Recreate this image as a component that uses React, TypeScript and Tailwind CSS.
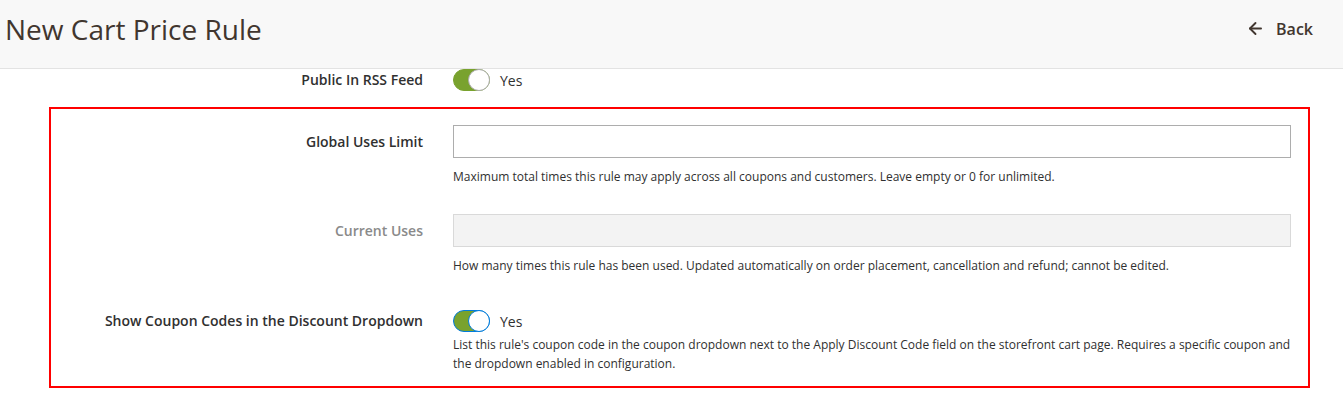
import { ArrowLeft } from "lucide-react";

const font = { fontFamily: "'Open Sans', 'Liberation Sans', sans-serif" };

function Toggle({ focused = false }: { focused?: boolean }) {
  return (
    <div className="flex items-center gap-[10px]">
      <div
        className={`relative w-[37px] h-[22px] rounded-full bg-[#79a22e] border ${
          focused ? "border-[#007bdb]" : "border-[#79a22e]"
        }`}
      >
        <span
          className={`absolute right-[-1px] top-[-1px] w-[22px] h-[22px] rounded-full bg-white border ${
            focused ? "border-[#007bdb]" : "border-[#adadad]"
          }`}
        />
      </div>
      <span className="text-[14px] text-[#303030]">Yes</span>
    </div>
  );
}

export default function App() {
  return (
    <div className="w-[1343px] h-[401px] bg-white overflow-hidden" style={font}>
      <header className="h-[69px] bg-[#f8f8f8] border-b border-[#e3e3e3] flex items-center justify-between pl-[5px] pr-[30px]">
        <h1 className="text-[28px] font-normal text-[#41362f] leading-none pb-[11px]">New Cart Price Rule</h1>
        <button className="flex items-center gap-[11px] text-[#41362f] font-semibold text-[16px] pb-[11px]">
          <ArrowLeft className="w-[19px] h-[19px]" strokeWidth={2.4} />
          Back
        </button>
      </header>

      <div className="pl-[51px]">
        <div className="grid grid-cols-[372px_838px] gap-x-[30px] items-center h-[22px]">
          <label className="text-right text-[14px] font-semibold text-[#303030] pb-[1px]">Public In RSS Feed</label>
          <Toggle />
        </div>
      </div>

      <section className="mt-[16px] ml-[49px] w-[1261px] border-2 border-[#ff0000] pt-[16px] pb-[13px]">
        <div className="grid grid-cols-[372px_838px] gap-x-[30px]">
          <label className="text-right text-[14px] font-semibold text-[#303030] pt-[6px]">Global Uses Limit</label>
          <div>
            <input className="w-full h-[33px] border border-[#adadad] bg-white" />
            <p className="mt-[10px] text-[12px] leading-[18px] text-[#303030]">
              Maximum total times this rule may apply across all coupons and customers. Leave empty or 0 for unlimited.
            </p>
          </div>
        </div>

        <div className="grid grid-cols-[372px_838px] gap-x-[30px] mt-[28px]">
          <label className="text-right text-[14px] font-semibold text-[#8a8a8a] pt-[6px]">Current Uses</label>
          <div>
            <input disabled className="w-full h-[33px] border border-[#d9d9d9] bg-[#f3f3f3]" />
            <p className="mt-[10px] text-[12px] leading-[18px] text-[#303030]">
              How many times this rule has been used. Updated automatically on order placement, cancellation and refund; cannot be edited.
            </p>
          </div>
        </div>

        <div className="grid grid-cols-[372px_838px] gap-x-[30px] mt-[35px]">
          <label className="text-right text-[14px] font-semibold text-[#303030] leading-[22px]">
            Show Coupon Codes in the Discount Dropdown
          </label>
          <div>
            <Toggle focused />
            <p className="mt-[3px] text-[12px] leading-[19px] text-[#303030]">
              List this rule's coupon code in the coupon dropdown next to the Apply Discount Code field on the storefront cart page. Requires a specific coupon and the dropdown enabled in configuration.
            </p>
          </div>
        </div>
      </section>
    </div>
  );
}
